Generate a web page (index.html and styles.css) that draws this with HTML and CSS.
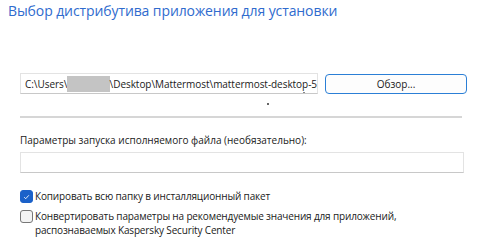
FILE: index.html
```
<!DOCTYPE html>
<html lang="ru">
<head>
<meta charset="utf-8">
<link rel="stylesheet" href="styles.css">
</head>
<body>
<div class="page">
  <h1 class="title">Выбор дистрибутива приложения для установки</h1>
  <div class="row">
    <div class="field path"><span>C:\Users\</span><span class="mask"></span><span>\Desktop\Mattermost\mattermost-desktop-5</span><i class="tick"></i></div>
    <button class="btn">Обзор...</button>
  </div>
  <div class="dotline"><i class="dot"></i></div>
  <div class="sep"></div>
  <label class="label">Параметры запуска исполняемого файла (необязательно):</label>
  <div class="field wide"></div>
  <div class="check first">
    <span class="box on"><svg viewBox="0 0 14 14" width="14" height="14"><path d="M4 7.2l2 2 4-4.4" fill="none" stroke="#fff" stroke-width="1.1"/></svg></span>
    <span class="ctext">Копировать всю папку в инсталляционный пакет</span>
  </div>
  <div class="check">
    <span class="box"></span>
    <span class="ctext">Конвертировать параметры на рекомендуемые значения для приложений,<br>распознаваемых Kaspersky Security Center</span>
  </div>
</div>
</body>
</html>
```
FILE: styles.css
```
* { box-sizing: border-box; }
html, body { margin: 0; background: #fff; }
body { width: 500px; height: 250px; overflow: hidden; font-family: "Open Sans", "Noto Sans", sans-serif; font-size: 10px; color: #1a1a1a; }
.page { padding: 0 0 0 20px; }
.title { margin: 0 0 0 -12px; padding-top: 1px; font-size: 14px; font-weight: 400; color: #2f6bce; line-height: 20px; letter-spacing: -0.1px; }
.row { display: flex; align-items: center; gap: 7px; margin-top: 52px; }
.field { border: 1px solid #e3e3e3; border-bottom-color: #c8c8c8; background: #fff; height: 21px; }
.path { width: 298px; display: flex; align-items: center; padding-left: 4px; white-space: nowrap; overflow: hidden; position: relative; font-size: 10px; letter-spacing: -0.05px; }
.mask { display: inline-block; width: 50px; height: 16px; background: #c4c4c4; }
.tick { position: absolute; right: 12px; bottom: 0; width: 2px; height: 1px; background: #888; }
.btn { width: 142px; height: 20px; border: 1px solid #2b7fd6; border-radius: 4px; background: #fdfdfd; font: inherit; font-size: 10px; color: #1a1a1a; padding: 0; }
.dotline { height: 22px; position: relative; }
.dot { position: absolute; left: 247px; top: 9px; width: 2px; height: 2px; background: #666; }
.sep { width: 442px; height: 2px; background: #d6d6d6; }
.label { display: block; margin-top: 15px; line-height: 14px; }
.wide { width: 444px; margin-top: 5px; }
.check { display: flex; align-items: flex-start; gap: 2px; margin-top: 6px; line-height: 14px; letter-spacing: -0.15px; }
.check.first { margin-top: 16px; }
.box { flex: none; width: 13px; height: 13px; border: 1px solid #777; border-radius: 3px; background: #f3f3f3; display: flex; align-items: center; justify-content: center; margin-top: 1px; }
.box.on { background: #1b61c9; border-color: #1b61c9; }
.box svg { width: 12px; height: 12px; }
```
